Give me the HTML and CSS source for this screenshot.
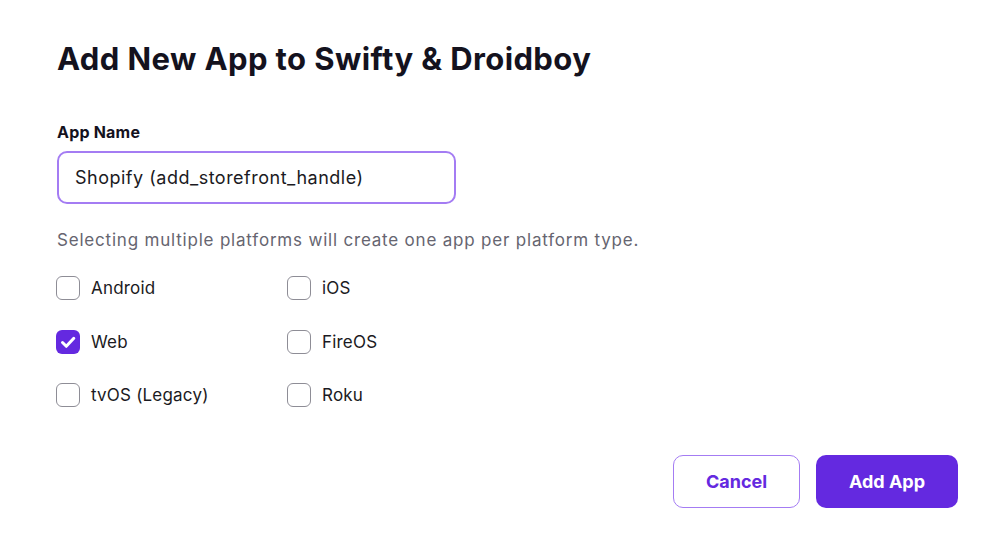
FILE: index.html
```html
<!DOCTYPE html>
<html>
<head>
<meta charset="utf-8">
<link rel="stylesheet" href="styles.css">
</head>
<body>
<div class="dialog">
  <h1 class="title">Add New App to Swifty &amp; Droidboy</h1>
  <label class="label" for="appname">App Name</label>
  <input id="appname" class="input" type="text" value="Shopify (add_storefront_handle)">
  <p class="help">Selecting multiple platforms will create one app per platform type.</p>
  <div class="grid">
    <label class="opt"><span class="box"></span><span>Android</span></label>
    <label class="opt"><span class="box"></span><span>iOS</span></label>
    <label class="opt"><span class="box checked"><svg width="24" height="24" viewBox="0 0 24 24"><path d="M6.5 12.5l3.8 3.8L17.8 8.3" fill="none" stroke="#fff" stroke-width="3" stroke-linecap="round" stroke-linejoin="round"/></svg></span><span>Web</span></label>
    <label class="opt"><span class="box"></span><span>FireOS</span></label>
    <label class="opt"><span class="box"></span><span>tvOS (Legacy)</span></label>
    <label class="opt"><span class="box"></span><span>Roku</span></label>
  </div>
  <div class="actions">
    <button class="btn secondary">Cancel</button>
    <button class="btn primary">Add App</button>
  </div>
</div>
</body>
</html>
```
FILE: styles.css
```css
* { box-sizing: border-box; }
html, body { margin: 0; padding: 0; background: #fff; }
body { font-family: Inter, "Noto Sans", sans-serif; color: #13111c; }
.dialog { padding: 38px 42px 0 57px; display: flex; flex-direction: column; width: 1000px; }
.title { margin: 0; font-size: 31px; font-weight: 700; letter-spacing: 0.4px; line-height: 42px; color: #14121e; }
.label { margin-top: 42px; font-size: 16px; font-weight: 700; line-height: 20px; color: #14121e; letter-spacing: 0.2px; }
.input { margin-top: 9px; width: 399px; height: 53px; border: 2px solid #a47cf3; border-radius: 10px; padding: 0 16px; font-family: inherit; font-size: 18px; letter-spacing: 0.5px; color: #1b1a22; outline: none; }
.help { margin: 25px 0 0; font-size: 17px; line-height: 22px; color: #666570; letter-spacing: 0.8px; }
.grid { margin-top: 25px; display: grid; grid-template-columns: 231px 200px; row-gap: 29.5px; margin-left: -1px; }
.opt { display: flex; align-items: center; gap: 11px; height: 24px; font-size: 17px; color: #1b1a22; letter-spacing: 0.2px; }
.box { width: 24px; height: 24px; border: 1.5px solid #8e8d96; border-radius: 6px; display: flex; align-items: center; justify-content: center; flex: none; }
.box.checked { background: #6429e0; border: none; }
.actions { margin-top: 48px; display: flex; justify-content: flex-end; gap: 16px; }
.btn { height: 53px; border-radius: 10px; font-family: inherit; font-size: 18px; font-weight: 700; cursor: pointer; }
.secondary { width: 127px; background: #fff; border: 1.5px solid #a47cf3; color: #6429e0; }
.primary { width: 142px; background: #6429e0; border: none; color: #fff; }
```
